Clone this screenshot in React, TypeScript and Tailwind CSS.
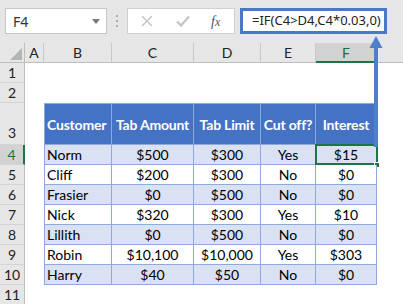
import React from "react";

const cols = [
  { key: "A", w: "w-[19px]" },
  { key: "B", w: "w-[68px]" },
  { key: "C", w: "w-[82px]" },
  { key: "D", w: "w-[67px]" },
  { key: "E", w: "w-[55px]" },
  { key: "F", w: "w-[61px]" },
];

const data = [
  ["Norm", "$500", "$300", "Yes", "$15"],
  ["Cliff", "$200", "$300", "No", "$0"],
  ["Frasier", "$0", "$500", "No", "$0"],
  ["Nick", "$320", "$300", "Yes", "$10"],
  ["Lillith", "$0", "$500", "No", "$0"],
  ["Robin", "$10,100", "$10,000", "Yes", "$303"],
  ["Harry", "$40", "$50", "No", "$0"],
];

const headers = ["Customer", "Tab Amount", "Tab Limit", "Cut off?", "Interest"];
const widths = ["w-[68px]", "w-[82px]", "w-[67px]", "w-[55px]", "w-[61px]"];

const cellFont = { fontFamily: "Lato, 'Liberation Sans', sans-serif" };

function RowHeader({ n, h, selected, bottom }: { n: number; h: string; selected?: boolean; bottom?: boolean }) {
  return (
    <div
      className={`${h} w-[25px] shrink-0 flex justify-center text-[14px] border-b border-[#d4d4d4] ${
        bottom ? "items-end pb-[1px]" : "items-center"
      } ${selected ? "bg-[#d2d2d2] text-[#217346] border-r-2 border-r-[#217346]" : "bg-[#e6e6e6] text-[#222] border-r border-r-[#bdbdbd]"}`}
    >
      {n}
    </div>
  );
}

export default function App() {
  return (
    <div className="relative w-[403px] h-[304px] overflow-hidden bg-white" style={cellFont}>
      {/* Toolbar */}
      <div className="h-[43px] bg-[#e6e6e6] flex items-start pt-[8px]">
        <div
          className="ml-[5px] w-[102px] h-[26px] bg-white border border-[#c6c6c6] flex items-center justify-between pl-[7px] pr-[6px] text-[14px] text-[#333]"
          style={{ fontFamily: "'Noto Sans', sans-serif" }}
        >
          <span>F4</span>
          <svg width="8" height="5" viewBox="0 0 8 5"><path d="M0 0h8L4 5z" fill="#777" /></svg>
        </div>
        <div className="w-[20px] h-[26px] flex flex-col items-center justify-center gap-[3px]">
          <span className="w-[2px] h-[2px] bg-[#aaa]" />
          <span className="w-[2px] h-[2px] bg-[#aaa]" />
          <span className="w-[2px] h-[2px] bg-[#aaa]" />
        </div>
        <div className="w-[108px] h-[26px] bg-white border border-[#d0d0d0] flex items-center">
          <svg className="ml-[13px]" width="12" height="12" viewBox="0 0 12 12">
            <path d="M1 1L11 11M11 1L1 11" stroke="#c4c4c4" strokeWidth="1.5" />
          </svg>
          <svg className="ml-[23px]" width="14" height="12" viewBox="0 0 14 12">
            <path d="M1 6.5L5 10.5L13 1.5" stroke="#c4c4c4" strokeWidth="2.2" fill="none" />
          </svg>
          <span className="ml-[21px] text-[14px] italic text-[#555]" style={{ fontFamily: "'Liberation Serif', serif" }}>
            f<span className="text-[12px]">x</span>
          </span>
        </div>
        <div
          className="ml-[5px] w-[147px] h-[26px] bg-white border-[3px] border-[#4a78c6] flex items-center pl-[9px] text-[13px] text-[#222] whitespace-nowrap"
          style={{ fontFamily: "'Noto Sans', sans-serif" }}
        >
          =IF(C4&gt;D4,C4*0.03,0)
        </div>
      </div>

      {/* Column headers */}
      <div className="flex h-[20px]">
        <div className="w-[25px] h-[20px] bg-[#e6e6e6] border-r border-b border-[#bdbdbd] relative shrink-0">
          <svg className="absolute right-[2px] bottom-[2px]" width="12" height="12" viewBox="0 0 12 12">
            <path d="M12 0V12H0z" fill="#b4b4b4" />
          </svg>
        </div>
        {cols.map((c) => (
          <div
            key={c.key}
            className={`${c.w} h-[20px] shrink-0 flex items-center justify-center text-[14px] ${
              c.key === "F"
                ? "bg-[#d2d2d2] text-[#1e6b40] border-b-2 border-b-[#217346] border-r border-r-[#c8c8c8]"
                : "bg-[#e6e6e6] text-[#222] border-b border-b-[#bdbdbd] border-r border-r-[#c8c8c8]"
            }`}
          >
            {c.key}
          </div>
        ))}
        <div className="flex-1 h-[20px] bg-[#e6e6e6] border-b border-[#bdbdbd]" />
      </div>

      {/* Rows 1-2 */}
      <div className="flex">
        <RowHeader n={1} h="h-[20px]" />
      </div>
      <div className="flex">
        <RowHeader n={2} h="h-[20px]" />
      </div>

      {/* Row 3: table header */}
      <div className="flex">
        <RowHeader n={3} h="h-[42px]" bottom />
        <div className="w-[19px] shrink-0" />
        {headers.map((t, i) => (
          <div
            key={t}
            className={`${widths[i]} h-[42px] shrink-0 bg-[#4472c4] text-white font-bold text-[14px] flex items-center border-t border-r border-b border-[#8ea9db] ${
              i === 0 ? "border-l pl-[2px]" : "justify-center"
            } whitespace-nowrap tracking-[-0.2px]`}
          >
            {t}
          </div>
        ))}
      </div>

      {/* Data rows */}
      {data.map((row, r) => (
        <div className="flex" key={r}>
          <RowHeader n={r + 4} h="h-[20px]" selected={r === 0} />
          <div className="w-[19px] shrink-0" />
          {row.map((v, i) => (
            <div
              key={i}
              className={`${widths[i]} h-[20px] shrink-0 text-[14px] text-black flex items-center border-r border-b border-[#8ea9db] whitespace-nowrap relative ${
                r % 2 === 0 ? "bg-[#d9e1f2]" : "bg-white"
              } ${i === 0 ? "border-l pl-[2px]" : "justify-center"}`}
            >
              {v}
              {r === 0 && i === 4 && (
                <>
                  <div className="absolute left-[-1px] top-[-1px] right-[-2px] bottom-[-1px] border-2 border-[#217346]" />
                  <div className="absolute right-[-4px] bottom-[-4px] w-[6px] h-[6px] bg-[#217346] border border-white" />
                </>
              )}
            </div>
          ))}
        </div>
      ))}

      {/* Row 11 */}
      <div className="flex">
        <RowHeader n={11} h="h-[20px]" />
      </div>

      {/* Arrow overlay */}
      <svg className="absolute left-[368px] top-[35px]" width="16" height="112" viewBox="0 0 16 112">
        <path d="M8 1L14.5 13H10V112H6V13H1.5z" fill="#4e7fcb" />
      </svg>
    </div>
  );
}
